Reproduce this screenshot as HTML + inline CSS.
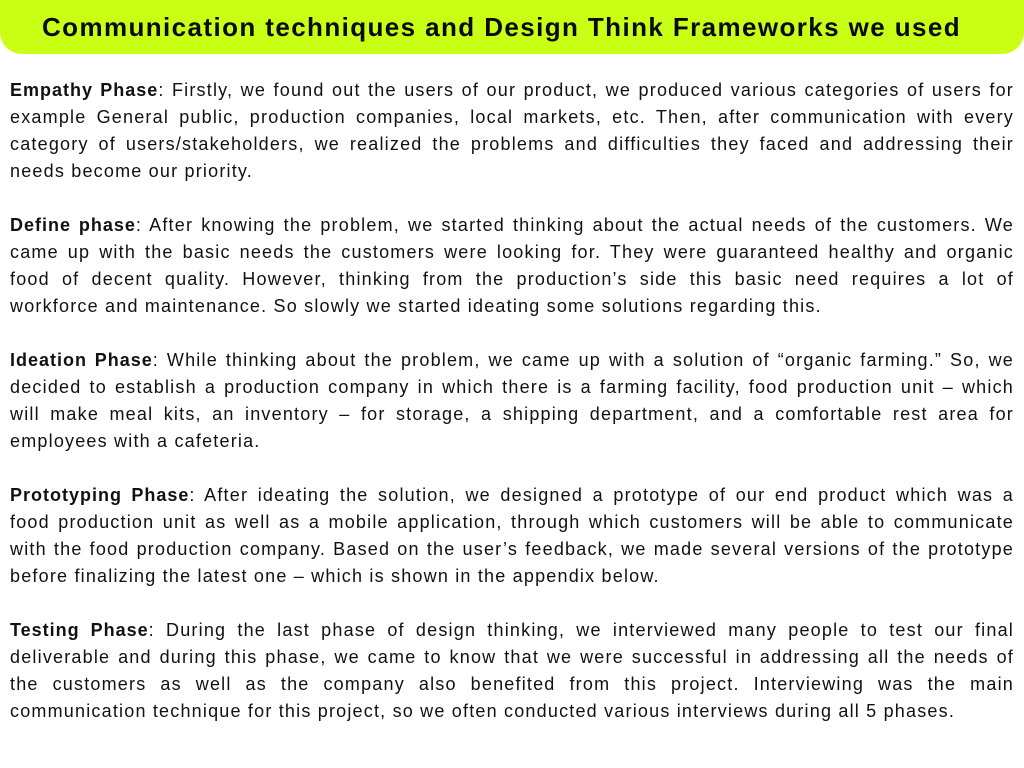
<!DOCTYPE html>
<html><head><meta charset="utf-8"><style>
body{margin:0;width:1024px;height:768px;background:#fff;overflow:hidden;font-family:"Liberation Sans",sans-serif;color:#111;}
.hdr{position:absolute;left:0;top:0;width:1024px;height:54px;background:#c8ff14;border-radius:0 0 22px 22px;}
.hdr div{position:absolute;left:42px;width:916px;top:12px;text-align:left;text-align-last:justify;font-size:26px;font-weight:bold;letter-spacing:1.4px;color:#0a0a0a;white-space:nowrap;}
.t{position:absolute;left:10px;width:1004px;top:77px;font-size:18px;letter-spacing:1.2px;}
.l{height:27px;line-height:27px;text-align:justify;text-align-last:justify;white-space:nowrap;}
.l.e{text-align-last:left;}
.gap{height:27px;}
b{font-weight:bold;letter-spacing:1px;}
</style></head><body>
<div class="hdr"><div>Communication techniques and Design Think Frameworks we used</div></div>
<div class="t">
<div class="l"><b>Empathy Phase</b>: Firstly, we found out the users of our product, we produced various categories of users for</div>
<div class="l">example General public, production companies, local markets, etc. Then, after communication with every</div>
<div class="l">category of users/stakeholders, we realized the problems and difficulties they faced and addressing their</div>
<div class="l e">needs become our priority.</div>
<div class="gap"></div>
<div class="l"><b>Define phase</b>: After knowing the problem, we started thinking about the actual needs of the customers. We</div>
<div class="l">came up with the basic needs the customers were looking for. They were guaranteed healthy and organic</div>
<div class="l">food of decent quality. However, thinking from the production’s side this basic need requires a lot of</div>
<div class="l e">workforce and maintenance. So slowly we started ideating some solutions regarding this.</div>
<div class="gap"></div>
<div class="l"><b>Ideation Phase</b>: While thinking about the problem, we came up with a solution of “organic farming.” So, we</div>
<div class="l">decided to establish a production company in which there is a farming facility, food production unit – which</div>
<div class="l">will make meal kits, an inventory – for storage, a shipping department, and a comfortable rest area for</div>
<div class="l e">employees with a cafeteria.</div>
<div class="gap"></div>
<div class="l"><b>Prototyping Phase</b>: After ideating the solution, we designed a prototype of our end product which was a</div>
<div class="l">food production unit as well as a mobile application, through which customers will be able to communicate</div>
<div class="l">with the food production company. Based on the user’s feedback, we made several versions of the prototype</div>
<div class="l e">before finalizing the latest one – which is shown in the appendix below.</div>
<div class="gap"></div>
<div class="l"><b>Testing Phase</b>: During the last phase of design thinking, we interviewed many people to test our final</div>
<div class="l">deliverable and during this phase, we came to know that we were successful in addressing all the needs of</div>
<div class="l">the customers as well as the company also benefited from this project. Interviewing was the main</div>
<div class="l e">communication technique for this project, so we often conducted various interviews during all 5 phases.</div>
</div>
</body></html>
